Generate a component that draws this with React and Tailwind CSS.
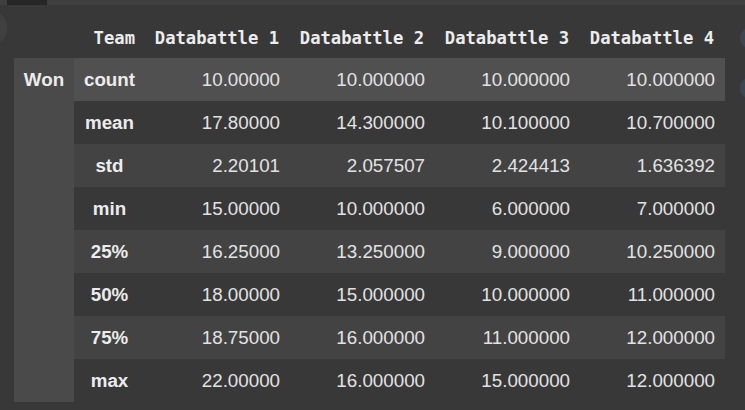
const columns = ["Databattle 1", "Databattle 2", "Databattle 3", "Databattle 4"];

const rows = [
  ["count", "10.00000", "10.000000", "10.000000", "10.000000"],
  ["mean", "17.80000", "14.300000", "10.100000", "10.700000"],
  ["std", "2.20101", "2.057507", "2.424413", "1.636392"],
  ["min", "15.00000", "10.000000", "6.000000", "7.000000"],
  ["25%", "16.25000", "13.250000", "9.000000", "10.250000"],
  ["50%", "18.00000", "15.000000", "10.000000", "11.000000"],
  ["75%", "18.75000", "16.000000", "11.000000", "12.000000"],
  ["max", "22.00000", "16.000000", "15.000000", "12.000000"],
];

const rowBg = (i) => {
  if (i === 0) return "bg-[#505050]";
  return i % 2 === 0 ? "bg-[#434343]" : "bg-[#383838]";
};

const App = () => {
  return (
    <div className="w-[745px] h-[410px] overflow-hidden bg-[#383838] flex flex-col">
      {/* top strip */}
      <div className="flex h-[5px] shrink-0">
        <div className="w-[7px] bg-[#3f3f3f]" />
        <div className="w-[40px] bg-[#262626]" />
        <div className="flex-1 bg-[#3f3f3f]" />
      </div>

      <div className="flex flex-1">
        {/* left gutter */}
        <div className="w-[14px] shrink-0">
          <div className="w-[36px] h-[36px] rounded-full bg-[#404040] -ml-[29px] mt-[5px]" />
        </div>

        {/* table */}
        <table
          className="table-fixed w-[711px] border-collapse mt-[15px] self-start text-[#e2e2e2]"
          style={{ fontFamily: '"Liberation Sans", Arial, sans-serif' }}
        >
          <colgroup>
            <col className="w-[60px]" />
            <col className="w-[71px]" />
            <col className="w-[145px]" />
            <col className="w-[145px]" />
            <col className="w-[145px]" />
            <col className="w-[145px]" />
          </colgroup>
          <thead>
            <tr
              className="h-[38px] text-[17.2px] font-bold text-[#ececec]"
              style={{ fontFamily: '"DejaVu Sans Mono", monospace' }}
            >
              <th />
              <th className="text-right pr-[10px] align-middle">Team</th>
              {columns.map((c) => (
                <th key={c} className="text-right pr-[11px] align-middle whitespace-nowrap">
                  {c}
                </th>
              ))}
            </tr>
          </thead>
          <tbody className="text-[18.75px]">
            {rows.map((r, i) => (
              <tr key={r[0]} className={`h-[43px] ${rowBg(i)}`}>
                {i === 0 && (
                  <th
                    rowSpan={rows.length}
                    className="bg-[#4a4a4a] align-top leading-[43px] font-bold text-[#ececec] text-center"
                  >
                    Won
                  </th>
                )}
                <th className={`font-bold text-center text-[#ececec] pt-[2px] ${i === 0 ? "bg-[#505050]" : ""}`}>
                  {r[0]}
                </th>
                {r.slice(1).map((v, j) => (
                  <td key={j} className="text-right pr-[10px] pt-[2px]">
                    {v}
                  </td>
                ))}
              </tr>
            ))}
          </tbody>
        </table>

        {/* right gutter */}
        <div className="w-[20px] shrink-0 flex flex-col">
          <div className="w-[36px] h-[22px] rounded-full bg-[#3d4550] ml-[15px] mt-[22px]" />
          <div className="w-[36px] h-[22px] rounded-full bg-[#3d4550] ml-[15px] mt-[28px]" />
        </div>
      </div>
    </div>
  );
};

export default App;
